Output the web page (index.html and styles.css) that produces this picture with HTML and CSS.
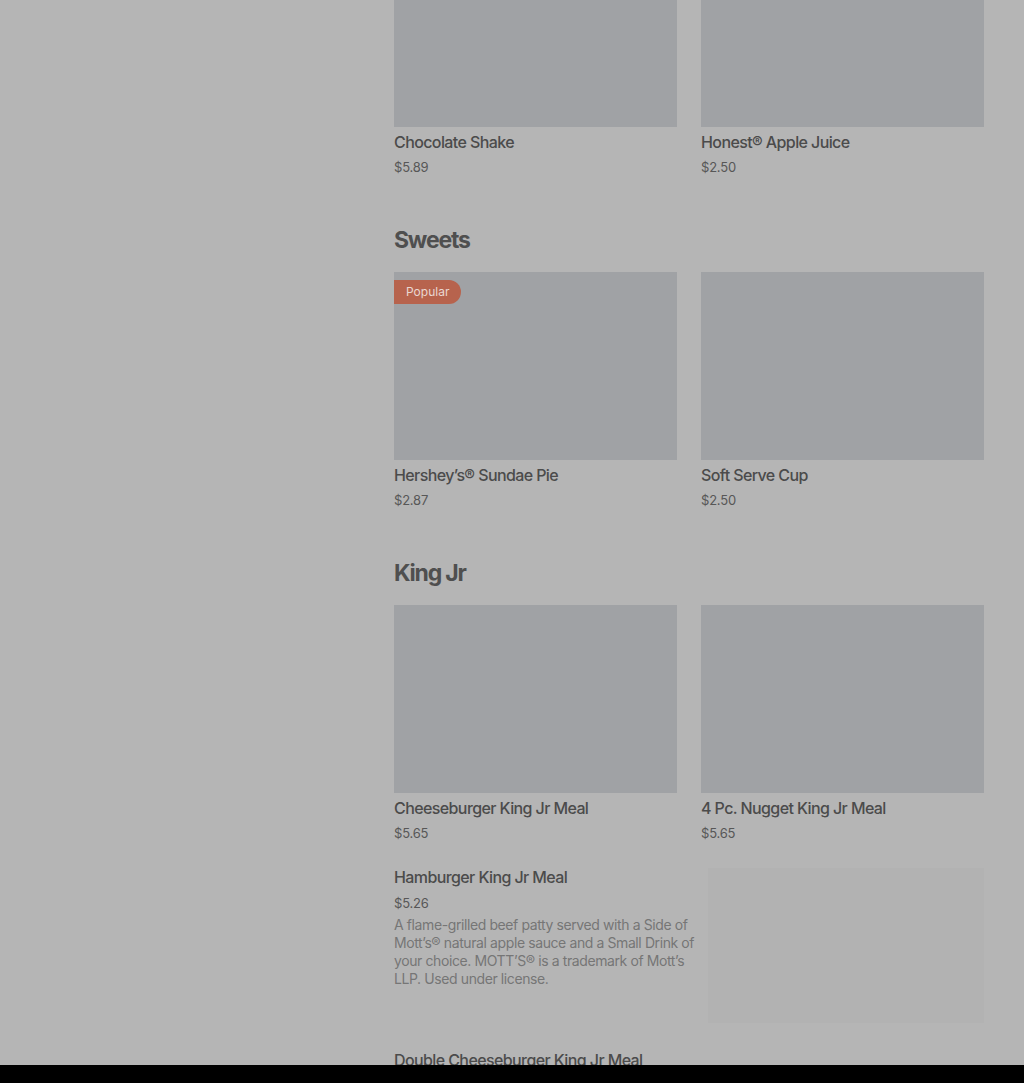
FILE: index.html
```html
<!DOCTYPE html>
<html lang="en">
<head>
    <meta charset="UTF-8">
    <meta name="viewport" content="width=device-width, initial-scale=1.0">
    <title>Menu</title>
    <link rel="stylesheet" href="styles.css">
</head>
<body>
    <div class="page">
        <aside class="sidebar"></aside>

        <main class="menu">
            <div class="grid">
                <div class="item">
                    <div class="thumb"></div>
                    <div class="item-name">Chocolate Shake</div>
                    <div class="item-price">$5.89</div>
                </div>
                <div class="item">
                    <div class="thumb"></div>
                    <div class="item-name">Honest® Apple Juice</div>
                    <div class="item-price">$2.50</div>
                </div>
            </div>

            <h2 class="section-title">Sweets</h2>
            <div class="grid">
                <div class="item">
                    <div class="thumb">
                        <span class="badge">Popular</span>
                    </div>
                    <div class="item-name">Hershey’s® Sundae Pie</div>
                    <div class="item-price">$2.87</div>
                </div>
                <div class="item">
                    <div class="thumb"></div>
                    <div class="item-name">Soft Serve Cup</div>
                    <div class="item-price">$2.50</div>
                </div>
            </div>

            <h2 class="section-title">King Jr</h2>
            <div class="grid">
                <div class="item">
                    <div class="thumb"></div>
                    <div class="item-name">Cheeseburger King Jr Meal</div>
                    <div class="item-price">$5.65</div>
                </div>
                <div class="item">
                    <div class="thumb"></div>
                    <div class="item-name">4 Pc. Nugget King Jr Meal</div>
                    <div class="item-price">$5.65</div>
                </div>
            </div>

            <div class="row-item">
                <div class="row-text">
                    <div class="item-name">Hamburger King Jr Meal</div>
                    <div class="item-price">$5.26</div>
                    <p class="item-desc">A flame-grilled beef patty served with a Side of Mott’s® natural apple sauce and a Small Drink of your choice. MOTT’S® is a trademark of Mott’s LLP. Used under license.</p>
                </div>
                <div class="row-thumb"></div>
            </div>

            <div class="row-item next">
                <div class="row-text">
                    <div class="item-name">Double Cheeseburger King Jr Meal</div>
                </div>
            </div>
        </main>
    </div>

    <div class="bottom-bar"></div>
</body>
</html>
```

FILE: styles.css
```css
body {
    margin: 0;
    background: #b5b5b5;
    font-family: Inter, Roboto, "Noto Sans", sans-serif;
    color: #4b4b4b;
    overflow: hidden;
}

.page {
    display: grid;
    grid-template-columns: 370px 590px;
    column-gap: 24px;
    margin-top: -61px;
}

.grid {
    display: grid;
    grid-template-columns: 1fr 1fr;
    column-gap: 24px;
}

.thumb {
    position: relative;
    height: 188px;
    background: #a0a2a5;
}

.badge {
    position: absolute;
    top: 8px;
    left: 0;
    height: 24px;
    line-height: 24px;
    padding: 0 12px;
    background: #b7634d;
    color: #ead7d1;
    font-size: 12px;
    border-radius: 0 12px 12px 0;
}

.item-name {
    margin-top: 5px;
    font-size: 16px;
    line-height: 20px;
    font-weight: 500;
    color: #4b4b4b;
    letter-spacing: -0.6px;
}

.item-price {
    margin-top: 6px;
    font-size: 13px;
    line-height: 18px;
    color: #575757;
    letter-spacing: -0.2px;
}

.section-title {
    margin: 48px 0 16px;
    font-size: 23px;
    line-height: 32px;
    font-weight: 700;
    letter-spacing: -1.2px;
    color: #4f4f4f;
}

.row-item {
    display: grid;
    grid-template-columns: 1fr 276px;
    column-gap: 8px;
    margin-top: 25px;
}

.row-item.next {
    margin-top: 27px;
}

.row-text .item-name {
    margin-top: 0;
}

.row-text .item-price {
    margin-top: 7px;
}

.item-desc {
    margin: 4px 0 0;
    font-size: 14px;
    line-height: 18px;
    color: #767676;
    letter-spacing: -0.4px;
}

.row-thumb {
    margin-top: 1px;
    height: 155px;
    background: #b2b2b2;
}

.bottom-bar {
    position: fixed;
    left: 0;
    right: 0;
    bottom: 0;
    height: 18px;
    background: #000;
}
```
